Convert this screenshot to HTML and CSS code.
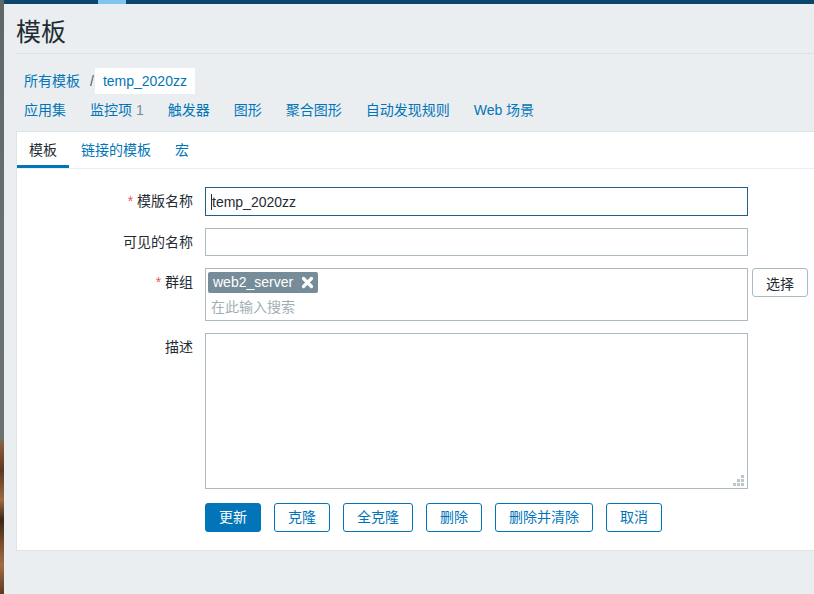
FILE: index.html
```html
<!DOCTYPE html>
<html lang="zh-CN">
<head>
<meta charset="utf-8">
<title>模板</title>
<link rel="stylesheet" href="styles.css">
</head>
<body>
<div class="desk">
  <div class="strip"></div>
  <div class="app">
    <div class="topbar"><span class="topbar-mark"></span></div>
    <main class="page">
      <header class="page-header"><h1 class="page-title">模板</h1></header>
      <nav class="breadcrumbs">
        <a class="crumb" href="#">所有模板</a>
        <span class="crumb-sep">/</span>
        <a class="crumb crumb-current" href="#">temp_2020zz</a>
      </nav>
      <nav class="subnav">
        <a href="#">应用集</a>
        <a href="#">监控项 <span class="count">1</span></a>
        <a href="#">触发器</a>
        <a href="#">图形</a>
        <a href="#">聚合图形</a>
        <a href="#">自动发现规则</a>
        <a href="#">Web 场景</a>
      </nav>
      <section class="card">
        <div class="tabs">
          <a class="tab tab-active" href="#">模板</a>
          <a class="tab" href="#">链接的模板</a>
          <a class="tab" href="#">宏</a>
        </div>
        <form class="form">
          <label class="form-label"><span class="req">*</span> 模版名称</label>
          <div class="form-field">
            <div class="text-input text-input-focus"><span class="caret"></span>temp_2020zz</div>
          </div>

          <label class="form-label">可见的名称</label>
          <div class="form-field">
            <input class="text-input" type="text" value="">
          </div>

          <label class="form-label"><span class="req">*</span> 群组</label>
          <div class="form-field field-row">
            <div class="multiselect">
              <span class="chip">web2_server
                <svg class="chip-x" width="13" height="13" viewBox="0 0 13 13"><path d="M2.5 2.5 L10.5 10.5 M10.5 2.5 L2.5 10.5" stroke="#fff" stroke-width="3.2" stroke-linecap="round"/></svg>
              </span>
              <input class="ms-input" type="text" placeholder="在此输入搜索">
            </div>
            <button class="btn-grey" type="button">选择</button>
          </div>

          <label class="form-label">描述</label>
          <div class="form-field">
            <div class="textarea-wrap">
              <textarea class="textarea"></textarea>
              <svg class="grip" width="11" height="11" viewBox="0 0 11 11"><g fill="#bcc6cb"><rect x="8" y="0" width="3" height="3"/><rect x="4" y="4" width="3" height="3"/><rect x="8" y="4" width="3" height="3"/><rect x="0" y="8" width="3" height="3"/><rect x="4" y="8" width="3" height="3"/><rect x="8" y="8" width="3" height="3"/></g></svg>
            </div>
          </div>

          <div class="form-label"></div>
          <div class="form-field buttons">
            <button class="btn btn-primary" type="button">更新</button>
            <button class="btn" type="button">克隆</button>
            <button class="btn" type="button">全克隆</button>
            <button class="btn" type="button">删除</button>
            <button class="btn" type="button">删除并清除</button>
            <button class="btn" type="button">取消</button>
          </div>
        </form>
      </section>
    </main>
  </div>
</div>
</body>
</html>
```
FILE: styles.css
```css
html, body {
  margin: 0;
  padding: 0;
  height: 100%;
  overflow: hidden;
}

body {
  font-family: "Liberation Sans", "Noto Sans CJK SC", sans-serif;
  font-size: 14px;
  color: #1f2c33;
  background: #ebeef0;
}

a {
  text-decoration: none;
  color: #0275b8;
}

.desk {
  display: flex;
  height: 594px;
}

.strip {
  flex: none;
  width: 4px;
  background: linear-gradient(to bottom,
    #5f6668 0px, #6a7174 300px, #6c7274 438px,
    #8a5a36 446px, #5b3a22 470px, #9a6a43 500px,
    #3c2618 520px, #7d4f2e 545px, #a06c44 565px, #5e3a20 594px);
}

.app {
  flex: 1;
  min-width: 0;
  display: flex;
  flex-direction: column;
}

.topbar {
  flex: none;
  height: 4px;
  display: flex;
  padding-left: 94px;
  background: #0b466b;
}

.topbar-mark {
  width: 28px;
  background: #7fc4ef;
}

.page {
  padding-left: 12px;
}

.page-header {
  padding: 12px 0 5px;
  border-bottom: 1px solid #dce2e5;
}

.page-title {
  margin: 0;
  font-size: 25px;
  line-height: 32px;
  font-weight: normal;
  color: #1f2c33;
}

.breadcrumbs {
  display: flex;
  align-items: center;
  margin-top: 14px;
  height: 26px;
}

.crumb {
  padding: 0 8px;
  line-height: 26px;
}

.crumb-current {
  background: #fff;
}

.crumb-sep {
  color: #59554f;
  margin: 0 1px 0 2px;
}

.subnav {
  display: flex;
  gap: 24px;
  margin: 6px 0 0 8px;
  line-height: 20px;
}

.count {
  color: #768d99;
}

.card {
  margin-top: 11px;
  background: #fff;
  border: 1px solid #dfe4e7;
  border-right: none;
}

.tabs {
  display: flex;
  height: 36px;
  border-bottom: 1px solid #ebeef0;
}

.tab {
  padding: 0 12px;
  line-height: 36px;
}

.tab-active {
  color: #1f2c33;
  box-shadow: inset 0 -3px 0 #0275b8;
}

.form {
  display: grid;
  grid-template-columns: 176px auto;
  column-gap: 12px;
  row-gap: 12px;
  padding: 18px 0 18px;
}

.form-label {
  text-align: right;
  line-height: 28px;
  color: #1f2c33;
}

.req {
  color: #e45959;
}

.field-row {
  display: flex;
  align-items: flex-start;
  gap: 4px;
}

.text-input {
  box-sizing: border-box;
  display: block;
  width: 543px;
  height: 28px;
  margin: 0;
  padding: 0 5px;
  border: 1px solid #acbbc2;
  background: #fff;
  font: inherit;
  color: #1f2c33;
  line-height: 26px;
  outline: none;
}

.text-input-focus {
  display: flex;
  align-items: center;
  height: 29px;
  border-color: #1f5f8b;
}

.caret {
  width: 1px;
  height: 16px;
  background: #1f2c33;
}

.multiselect {
  box-sizing: border-box;
  width: 543px;
  height: 53px;
  padding: 3px 2px;
  border: 1px solid #acbbc2;
  background: #fff;
}

.chip {
  display: inline-flex;
  align-items: center;
  height: 21px;
  padding: 0 4px 0 5px;
  border-radius: 2px;
  background: #768d99;
  color: #fff;
  line-height: 21px;
}

.chip-x {
  margin-left: 8px;
}

.ms-input {
  display: block;
  box-sizing: border-box;
  width: 100%;
  height: 20px;
  margin-top: 4px;
  padding: 0 3px;
  border: none;
  font: inherit;
  line-height: 20px;
  outline: none;
  background: transparent;
}

.ms-input::placeholder {
  color: #a3afb5;
}

.btn-grey {
  box-sizing: border-box;
  width: 56px;
  height: 29px;
  padding: 0;
  border: 1px solid #acbbc2;
  border-radius: 3px;
  background: #fff;
  font: inherit;
  color: #1f2c33;
}

.textarea-wrap {
  position: relative;
  width: 543px;
  height: 156px;
}

.textarea {
  display: block;
  box-sizing: border-box;
  width: 100%;
  height: 100%;
  margin: 0;
  border: 1px solid #acbbc2;
  resize: none;
  font: inherit;
  outline: none;
}

.grip {
  position: absolute;
  right: 4px;
  bottom: 3px;
}

.buttons {
  display: flex;
  gap: 13px;
  margin-top: 2px;
}

.btn {
  box-sizing: border-box;
  height: 29px;
  padding: 0 13px;
  border: 1px solid #0275b8;
  border-radius: 3px;
  background: #fff;
  color: #0275b8;
  font: inherit;
  line-height: 27px;
}

.btn-primary {
  background: #0275b8;
  color: #fff;
}
```
